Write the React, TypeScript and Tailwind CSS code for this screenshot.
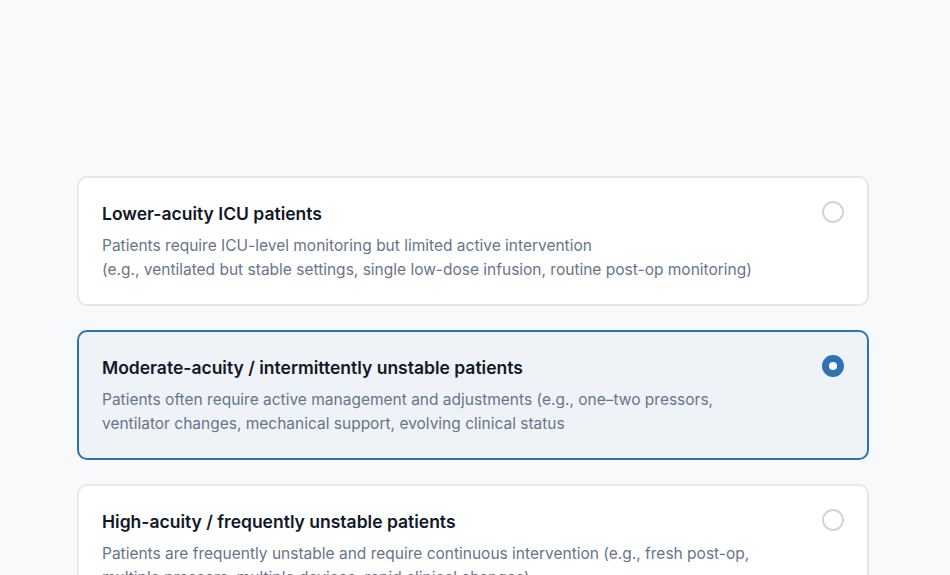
import React from "react";

const options = [
  {
    title: "Lower-acuity ICU patients",
    lines: [
      "Patients require ICU-level monitoring but limited active intervention",
      "(e.g., ventilated but stable settings, single low-dose infusion, routine post-op monitoring)",
    ],
    selected: false,
  },
  {
    title: "Moderate-acuity / intermittently unstable patients",
    lines: [
      "Patients often require active management and adjustments (e.g., one–two pressors, ventilator changes, mechanical support, evolving clinical status",
    ],
    selected: true,
  },
  {
    title: "High-acuity / frequently unstable patients",
    lines: [
      "Patients are frequently unstable and require continuous intervention (e.g., fresh post-op, multiple pressors, multiple devices, rapid clinical changes)",
    ],
    selected: false,
  },
];

export default function App() {
  return (
    <div
      className="min-h-[575px] h-[575px] overflow-hidden bg-[#f8f9fb] pt-[176px] pl-[77px]"
      style={{ fontFamily: "Inter, 'Noto Sans', sans-serif" }}
    >
      <div className="w-[792px] flex flex-col gap-[24px]">
        {options.map((o) => (
          <div
            key={o.title}
            className={
              o.selected
                ? "flex items-start justify-between rounded-[10px] border-2 border-[#2f72b4] bg-[#eff3f8] px-[23px] pt-[24px] pb-[22px]"
                : "flex items-start justify-between rounded-[10px] border-2 border-[#e5e7eb] bg-white px-[23px] pt-[24px] pb-[22px]"
            }
          >
            <div className="flex flex-col gap-[8px] max-w-[672px]">
              <div className="text-[17.5px] leading-[24px] font-semibold text-[#111827]">{o.title}</div>
              <div className="text-[15.5px] leading-[24px] text-[#67758a]">
                {o.lines.map((l, i) => (
                  <React.Fragment key={i}>
                    {i > 0 && <br />}
                    {l}
                  </React.Fragment>
                ))}
              </div>
            </div>
            {o.selected ? (
              <div className="-mt-[1px] w-[22px] h-[22px] shrink-0 rounded-full border-[7px] border-[#2f72b4] bg-white" />
            ) : (
              <div className="-mt-[1px] w-[22px] h-[22px] shrink-0 rounded-full border-2 border-[#d1d5db] bg-white" />
            )}
          </div>
        ))}
      </div>
    </div>
  );
}
